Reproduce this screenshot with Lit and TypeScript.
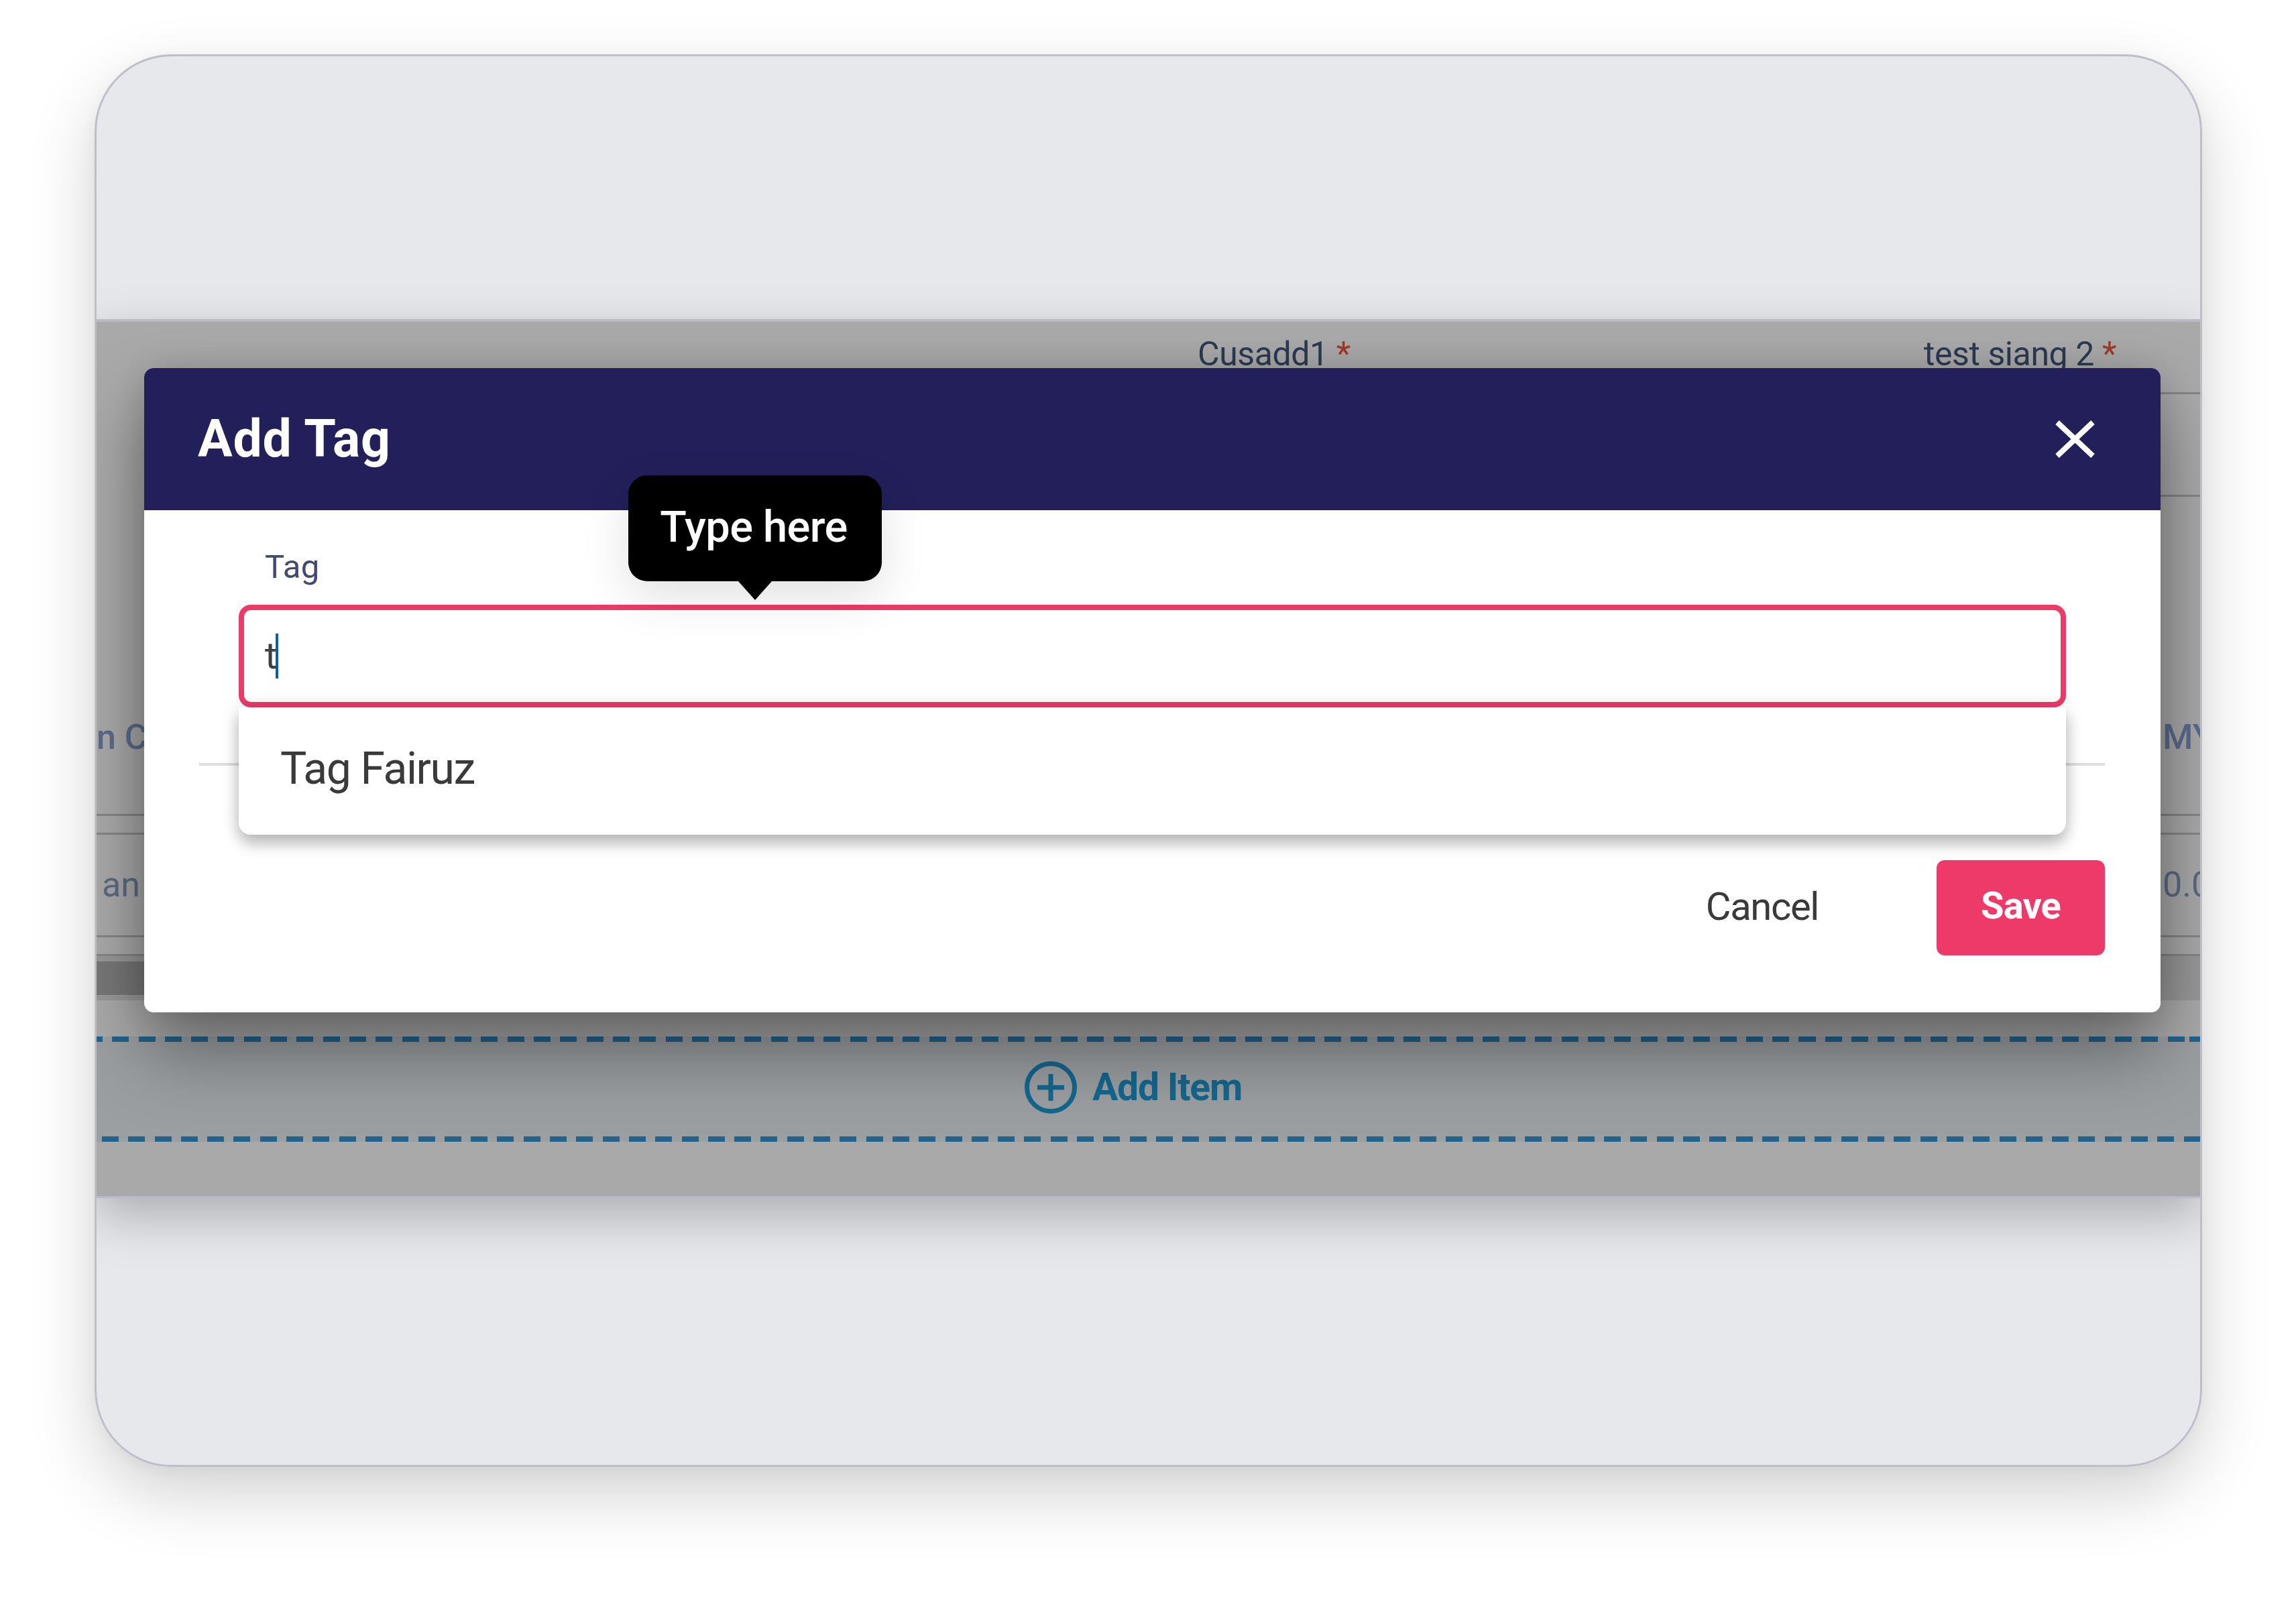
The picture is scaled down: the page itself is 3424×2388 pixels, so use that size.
import { LitElement, html, css } from "lit";
import { customElement } from "lit/decorators.js";

@customElement("app-root")
export class AppRoot extends LitElement {
  static styles = css`
    :host { display: block; font-family: Roboto, "Liberation Sans", sans-serif; background: #fff; }
    .page { padding: 81px 0 200px 141px; width: 3424px; height: 2388px; box-sizing: border-box; overflow: hidden; }
    .frame {
      width: 3143px; height: 2107px; box-sizing: border-box;
      border: 3px solid #bdbeca; border-radius: 115px; background: #e7e8ec; overflow: hidden;
      display: flex; flex-direction: column; filter: blur(.7px);
    }
    .shadow { border-radius: 115px; box-shadow: 0 40px 100px rgba(0,0,0,.18), 0 4px 24px rgba(0,0,0,.04); width: 3143px; height: 2107px; }
    .spaceTop { height: 392px; flex: none; }
    .band {
      position: relative; flex: none; box-sizing: border-box;
      border-top: 4px solid #b9bac4; border-bottom: 3px solid #b9bac4; height: 1311px;
      background: #a9a9a9; display: flex; flex-direction: column;
      box-shadow: 0 26px 70px rgba(0,0,0,.26);
    }
    .bgtext { white-space: nowrap; }
    .r1 { height: 105px; box-sizing: border-box; display: flex; font-size: 50px; letter-spacing: -.4px; color: #2b3a52; padding-top: 18px; line-height: 60px; }
    .c1 { margin-left: 1642px; width: 1083px; }
    .star { color: #9c3b2b; }
    .r2 { height: 150px; }
    .ruleR { margin-left: 3078px; height: 3px; background: #858585; flex: none; }
    .r1wrap { display: flex; flex-direction: column; flex: none; }
    .r3 { height: 473px; flex: none; display: flex; align-items: flex-end; justify-content: space-between; box-sizing: border-box; padding-bottom: 84px; font-size: 52px; font-weight: 500; color: #5a6b8c; line-height: 60px; }
    .r3 .r { width: 56px; overflow: hidden; white-space: nowrap; }
    .rule { height: 3px; background: #858585; flex: none; }
    .gap { height: 25px; flex: none; }
    .r4 { height: 150px; box-sizing: border-box; flex: none; display: flex; justify-content: space-between; align-items: center; font-size: 52px; color: #5d6a80; padding: 0 0 2px 8px; }
    .r4 .r { width: 56px; overflow: hidden; white-space: nowrap; }
    .track { height: 66px; flex: none; background: #989898; display: flex; align-items: center; }
    .thumb { width: 1500px; height: 50px; background: #777; }
    .spacerA { height: 54px; flex: none; }
    .addbox { height: 157px; flex: none; display: flex; flex-direction: column; justify-content: space-between; background: rgba(0,50,80,.08); }
    .dash { height: 8px; flex: none; background-image: repeating-linear-gradient(90deg, #22638c 0 25px, transparent 25px 39.3px); }
    .dash.top { background-position: -16px 0; }
    .dash.bottom { margin-left: 8px; }
    .addrow { display: flex; align-items: center; justify-content: center; gap: 22px; color: #14678f; font-size: 57px; font-weight: 700; letter-spacing: -1.2px; padding: 0 46px 6px 0; }
    .addrow svg { display: block; }

    .dialog {
      position: absolute; left: 71px; top: 69px; width: 3007px; height: 961px;
      background: #fff; border-radius: 14px; display: flex; flex-direction: column;
      box-shadow: 0 60px 110px rgba(0,0,0,.38), 0 0 60px rgba(0,0,0,.14);
    }
    .head {
      height: 212px; flex: none; background: #221f5a; border-radius: 14px 14px 0 0;
      display: flex; align-items: center; justify-content: space-between; padding: 0 98px 0 80px;
      color: #fff;
    }
    .title { font-size: 77px; font-weight: 700; line-height: 90px; letter-spacing: .7px; }
    .head svg { display: block; }
    .body { flex: 1; display: flex; flex-direction: column; padding-top: 55px; position: relative; }
    .label { font-size: 49px; line-height: 60px; color: #414b72; margin-left: 180px; letter-spacing: .3px; }
    .field { position: relative; margin: 26px 141px 0; height: 153px; box-sizing: border-box; border: 8px solid #ee3a69; border-radius: 18px; background: #fff; display: flex; align-items: center; padding-left: 31px; }
    .typed { font-size: 55px; color: #3d3d3d; line-height: 67px; }
    .caret { width: 4px; height: 67px; background: #0a5cb0; margin-left: -2px; }
    .menu {
      position: absolute; left: -8px; right: -8px; top: 145px; height: 190px; box-sizing: border-box;
      background: #fff; border-radius: 0 0 18px 18px;
      box-shadow: 0 14px 22px rgba(0,0,0,.24), 0 0 30px rgba(0,0,0,.12);
      display: flex; align-items: center; padding: 0 0 8px 62px;
      font-size: 66px; letter-spacing: -1.4px; color: #3a3a3a; z-index: 1;
    }
    .hr { height: 4px; background: #dfdfdf; margin: 83px 83px 0 82px; flex: none; }
    .foot { margin: 141px 83px 0 0; display: flex; justify-content: flex-end; align-items: center; gap: 176px; }
    .cancel { font-size: 58px; color: #3a3a3a; letter-spacing: -1.4px; padding-bottom: 4px; }
    .save { width: 251px; height: 142px; box-sizing: border-box; border-radius: 12px; background: #ee3a69; color: #fff; font-size: 56px; font-weight: 700; letter-spacing: -.8px; padding-bottom: 6px; display: flex; align-items: center; justify-content: center; }
    .tip {
      position: absolute; left: 722px; top: 160px; width: 378px; height: 158px; box-sizing: border-box;
      background: #000; color: #fff; border-radius: 28px; display: flex; align-items: center; justify-content: center;
      font-size: 65px; font-weight: 500; letter-spacing: -.6px; padding: 0 4px 4px 0; z-index: 2; box-shadow: 0 24px 70px rgba(0,0,0,.12);
    }
    .tip::after {
      content: ""; position: absolute; left: 164px; top: 158px; width: 0; height: 0;
      border-left: 25px solid transparent; border-right: 25px solid transparent; border-top: 28px solid #000;
    }
  `;

  render() {
    return html`
      <div class="page">
        <div class="shadow">
          <div class="frame">
            <div class="spaceTop"></div>
            <div class="band">
              <div class="r1wrap">
                <div class="r1">
                  <span class="bgtext c1">Cusadd1 <span class="star">*</span></span>
                  <span class="bgtext">test siang 2 <span class="star">*</span></span>
                </div>
                <div class="ruleR"></div>
                <div class="r2"></div>
                <div class="ruleR"></div>
              </div>
              <div class="r3"><span>n C</span><span class="r">MY</span></div>
              <div class="rule"></div>
              <div class="gap"></div>
              <div class="rule"></div>
              <div class="r4"><span>an</span><span class="r">0.00</span></div>
              <div class="rule"></div>
              <div class="gap"></div>
              <div class="rule"></div>
              <div class="track"><div class="thumb"></div></div>
              <div class="spacerA"></div>
              <div class="addbox">
                <div class="dash top"></div>
                <div class="addrow">
                  <svg width="80" height="80" viewBox="0 0 80 80" fill="none" stroke="#14678f">
                    <circle cx="40" cy="40" r="35.5" stroke-width="7"></circle>
                    <path d="M40 20V60M20 40H60" stroke-width="7"></path>
                  </svg>
                  <span>Add Item</span>
                </div>
                <div class="dash bottom"></div>
              </div>

              <div class="dialog">
                <div class="head">
                  <span class="title">Add Tag</span>
                  <svg width="59" height="56" viewBox="0 0 59 56" fill="none" stroke="#fff" stroke-width="8">
                    <path d="M3 3L56 53M56 3L3 53"></path>
                  </svg>
                </div>
                <div class="body">
                  <div class="label">Tag</div>
                  <div class="field">
                    <span class="typed">t</span><span class="caret"></span>
                    <div class="menu">Tag Fairuz</div>
                  </div>
                  <div class="hr"></div>
                  <div class="foot">
                    <span class="cancel">Cancel</span>
                    <span class="save">Save</span>
                  </div>
                </div>
                <div class="tip">Type here</div>
              </div>
            </div>
          </div>
        </div>
      </div>
    `;
  }
}
